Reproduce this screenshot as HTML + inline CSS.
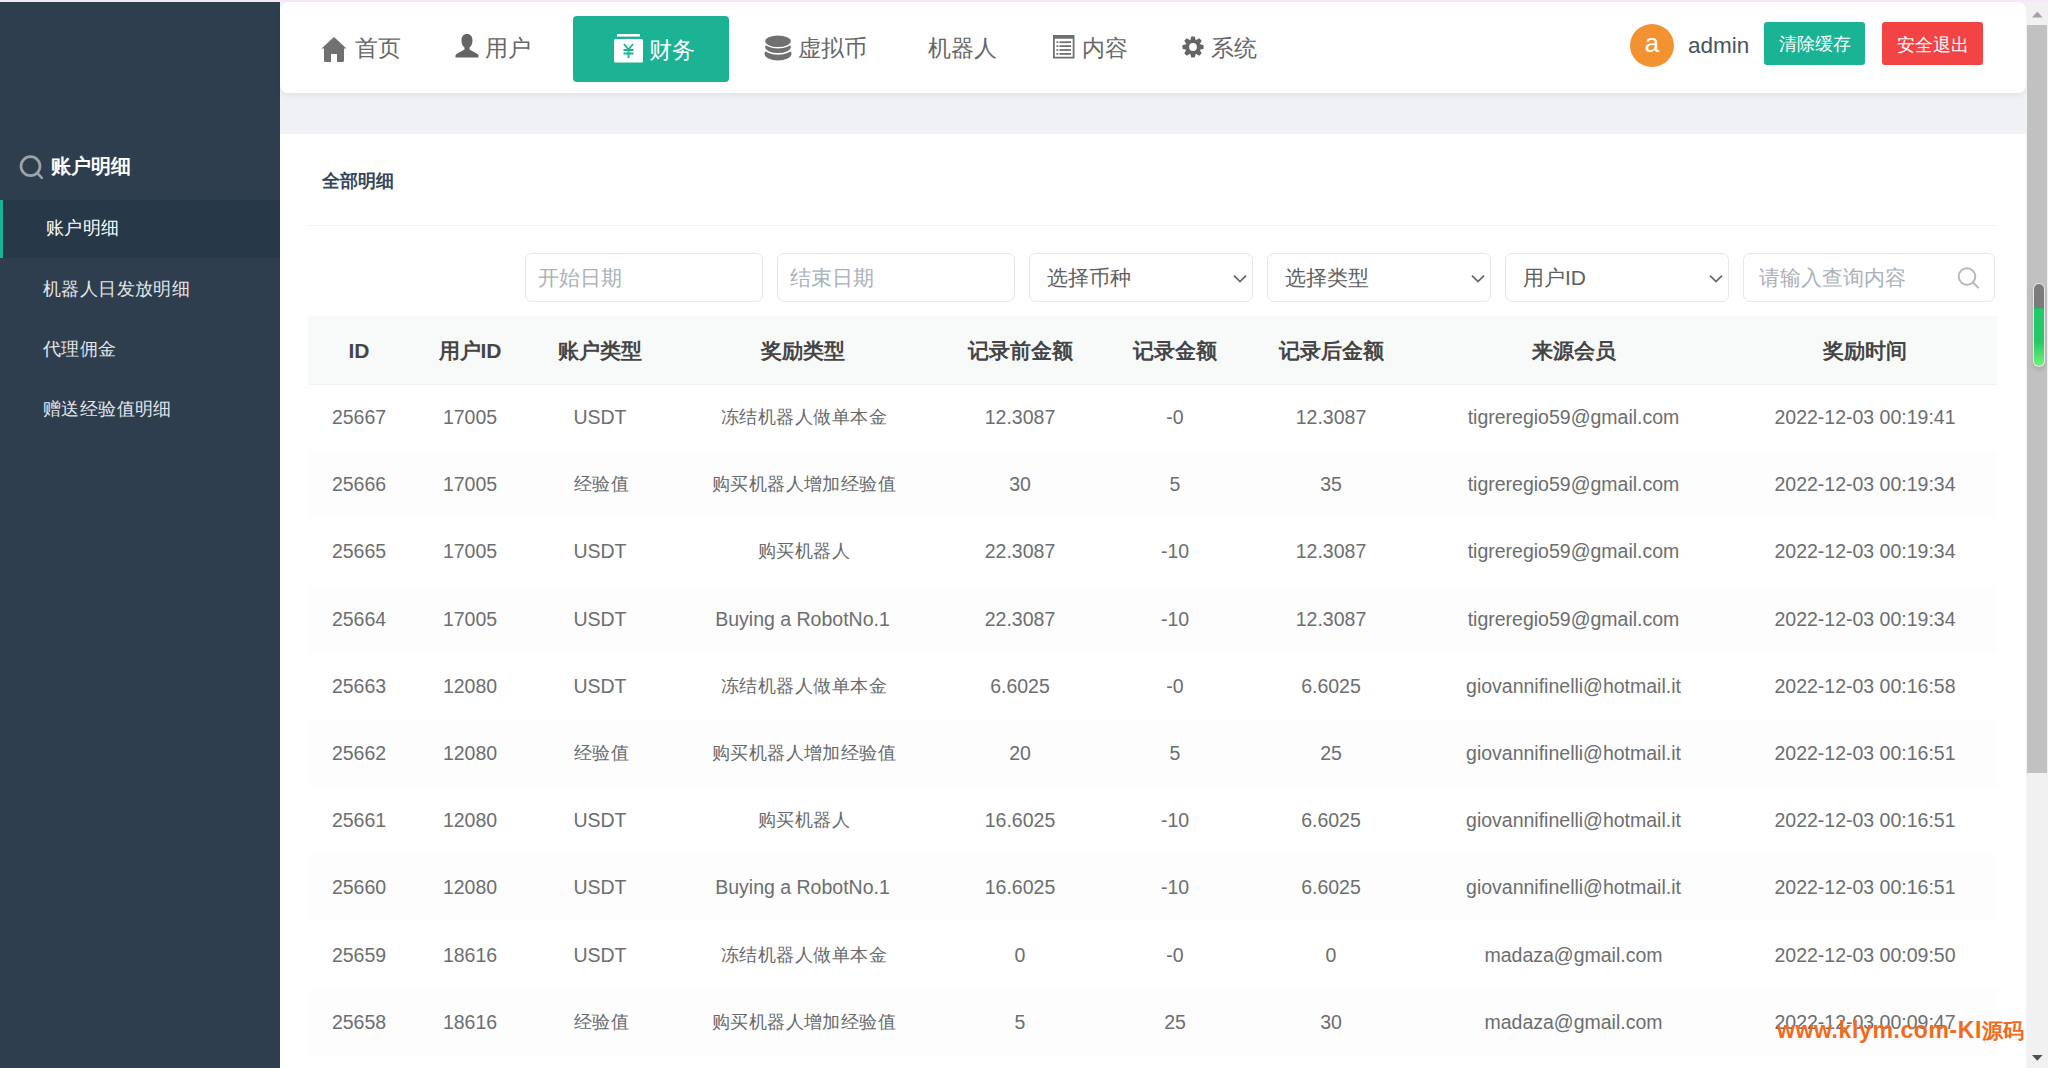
<!DOCTYPE html>
<html><head><meta charset="utf-8">
<style>
*{margin:0;padding:0;box-sizing:border-box}
html,body{width:2048px;height:1068px;overflow:hidden;background:#fff;font-family:"Liberation Sans",sans-serif}
.abs{position:absolute;white-space:nowrap}
#topline{position:absolute;left:0;top:0;width:2048px;height:3px;background:#f7e5f8}
#side{position:absolute;left:0;top:2px;width:280px;height:1066px;background:#2f3e4e}
#main{position:absolute;left:280px;top:2px;width:1747px;height:1066px;background:#f0f1f5}
#hdr{position:absolute;left:280px;top:2px;width:1746px;height:91px;background:#fff;border-radius:8px;box-shadow:0 3px 6px rgba(0,0,0,.05)}
#panel{position:absolute;left:280px;top:134px;width:1747px;height:934px;background:#fff}
#scroll{position:absolute;left:2026px;top:2px;width:22px;height:1066px;background:#f1f1f1}
#thumb{position:absolute;left:2027px;top:25px;width:20px;height:748px;background:#c1c1c1}
.nav{position:absolute;font-size:23px;color:#676767;line-height:26px;white-space:nowrap}
.ico{position:absolute}
.sb{position:absolute;left:0;width:280px;height:60px;color:#e3e6ea;font-size:18px;letter-spacing:0.4px;line-height:60px;white-space:nowrap}
.inp{position:absolute;top:253px;height:49px;border:1px solid #e5e6e7;border-radius:7px;background:#fff;font-size:21px;line-height:47px;padding-left:12px;white-space:nowrap}
.ph{color:#aab1b9}
.sel{color:#5f5f5f;padding-left:17px}
.chev{position:absolute;right:5px;top:20px}
.thead{position:absolute;left:308px;width:1689px;height:69px;background:#f8f9f9;border-bottom:1px solid #f1f1f1}
.tr{position:absolute;left:308px;width:1689px;height:67px}
.even{background:#fdfdfd}
.th,.td{position:absolute;width:300px;text-align:center;white-space:nowrap}
.th{top:0;line-height:70px;font-size:21px;font-weight:bold;color:#454545}
.td{top:0;line-height:67px;font-size:19.5px;color:#6c6e70}
.cj{font-size:18px;letter-spacing:0.45px;padding-left:3px;font-weight:500;color:#676a6c}
</style></head><body>
<div id="topline"></div>
<div id="side"></div>
<div id="main"></div>
<div id="panel"></div>
<div id="hdr"></div>
<div id="scroll"></div>
<div id="thumb"></div>

<!-- sidebar -->
<svg class="ico" style="left:19px;top:154px" width="26" height="26" viewBox="0 0 26 26"><circle cx="11.5" cy="12.2" r="9.5" fill="none" stroke="#9ea3a9" stroke-width="2.7"/><line x1="18.6" y1="19.4" x2="22.8" y2="23.8" stroke="#9ea3a9" stroke-width="2.6" stroke-linecap="round"/></svg>
<div class="abs" style="left:51px;top:154px;font-size:20px;line-height:24px;font-weight:bold;color:#fff">账户明细</div>
<div class="sb" style="top:200px;height:58px;line-height:56px;background:#273848;border-left:3px solid #1ab394;padding-left:43px;color:#fff">账户明细</div>
<div class="sb" style="top:259px;padding-left:43px">机器人日发放明细</div>
<div class="sb" style="top:319px;padding-left:43px">代理佣金</div>
<div class="sb" style="top:379px;padding-left:43px">赠送经验值明细</div>

<!-- header nav -->
<svg class="ico" style="left:321px;top:37px" width="26" height="25" viewBox="0 0 26 25"><path d="M13 0 L0.5 11.5 L3 11.5 L3 23.5 Q3 25 4.5 25 L10 25 L10 17 L16 17 L16 25 L21.5 25 Q23 25 23 23.5 L23 11.5 L25.5 11.5 Z" fill="#707070"/></svg>
<div class="nav" style="left:355px;top:35px">首页</div>
<svg class="ico" style="left:455px;top:34px" width="24" height="24" viewBox="0 0 24 24"><path d="M12 0 C8.5 0 6.5 2.5 6.5 6.5 C6.5 10 8 12.5 9.5 13.5 L9.5 15.5 L1.5 20 Q0 21 0.5 22.5 L0.5 23.5 L23.5 23.5 L23.5 22.5 Q24 21 22.5 20 L14.5 15.5 L14.5 13.5 C16 12.5 17.5 10 17.5 6.5 C17.5 2.5 15.5 0 12 0 Z" fill="#656565"/></svg>
<div class="nav" style="left:485px;top:35px">用户</div>

<div class="abs" style="left:573px;top:16px;width:156px;height:66px;background:#1bb394;border-radius:4px"></div>
<svg class="ico" style="left:614px;top:34px" width="29" height="29" viewBox="0 0 29 29"><rect x="3" y="0" width="23" height="2.6" fill="#fff"/><rect x="0" y="5" width="29" height="23.5" rx="1.5" fill="#fff"/><path d="M10 10 L14.5 15.5 L19 10 M9.5 16 L19.5 16 M9.5 19.5 L19.5 19.5 M14.5 15.5 L14.5 24" stroke="#1bb394" stroke-width="1.8" fill="none"/></svg>
<div class="nav" style="left:649px;top:37px;color:#fff">财务</div>

<svg class="ico" style="left:764px;top:34px" width="28" height="27" viewBox="0 0 28 27"><ellipse cx="14" cy="19.8" rx="13.5" ry="6.6" fill="#707070"/><ellipse cx="14" cy="13.3" rx="13.6" ry="6.6" fill="#707070" stroke="#fff" stroke-width="1.6"/><ellipse cx="14" cy="7.2" rx="13.6" ry="6.6" fill="#707070" stroke="#fff" stroke-width="1.6"/><rect x="0" y="0" width="28" height="1" fill="#fff"/></svg>
<div class="nav" style="left:798px;top:35px">虚拟币</div>
<div class="nav" style="left:928px;top:35px">机器人</div>
<svg class="ico" style="left:1053px;top:35px" width="22" height="24" viewBox="0 0 22 24"><path d="M0 0 H21.5 V23.5 H0 Z M1.8 3.8 V21.7 H19.7 V3.8 Z" fill="#707070" fill-rule="evenodd"/><rect x="3.5" y="6.3" width="1.8" height="1.8" fill="#707070"/><rect x="6.5" y="6.3" width="11.5" height="1.8" fill="#707070"/><rect x="3.5" y="10.2" width="1.8" height="1.8" fill="#707070"/><rect x="6.5" y="10.2" width="11.5" height="1.8" fill="#707070"/><rect x="3.5" y="14.1" width="1.8" height="1.8" fill="#707070"/><rect x="6.5" y="14.1" width="11.5" height="1.8" fill="#707070"/><rect x="3.5" y="18" width="1.8" height="1.8" fill="#707070"/><rect x="6.5" y="18" width="11.5" height="1.8" fill="#707070"/></svg>
<div class="nav" style="left:1082px;top:35px">内容</div>
<svg class="ico" style="left:1181.5px;top:35.5px" width="22" height="22" viewBox="0 0 22 22"><path d="M8.10 4.70 L9.30 0.40 L12.70 0.40 L13.90 4.70 Z M13.40 4.49 L17.29 2.30 L19.70 4.71 L17.51 8.60 Z M17.30 8.10 L21.60 9.30 L21.60 12.70 L17.30 13.90 Z M17.51 13.40 L19.70 17.29 L17.29 19.70 L13.40 17.51 Z M13.90 17.30 L12.70 21.60 L9.30 21.60 L8.10 17.30 Z M8.60 17.51 L4.71 19.70 L2.30 17.29 L4.49 13.40 Z M4.70 13.90 L0.40 12.70 L0.40 9.30 L4.70 8.10 Z M4.49 8.60 L2.30 4.71 L4.71 2.30 L8.60 4.49 Z" fill="#656565"/><circle cx="11" cy="11" r="7.3" fill="#656565"/><circle cx="11" cy="11" r="3.9" fill="#fff"/></svg>
<div class="nav" style="left:1211px;top:35px">系统</div>

<div class="abs" style="left:1630px;top:24px;width:44px;height:43px;border-radius:50%;background:#f39230;color:#fff;font-size:26px;line-height:38px;text-align:center">a</div>
<div class="abs" style="left:1688px;top:33px;font-size:22.5px;line-height:26px;color:#445366">admin</div>
<div class="abs" style="left:1764px;top:22px;width:101px;height:43px;background:#1ab394;border-radius:3px;color:#fff;font-size:18px;line-height:45px;text-align:center">清除缓存</div>
<div class="abs" style="left:1882px;top:22px;width:101px;height:43px;background:#f24444;border-radius:3px;color:#fff;font-size:18px;line-height:46px;text-align:center">安全退出</div>

<!-- panel content -->
<div class="abs" style="left:322px;top:168px;font-size:18px;line-height:26px;font-weight:bold;color:#34465a">全部明细</div>
<div class="abs" style="left:308px;top:225px;width:1689px;height:1px;background:#f1f1f1"></div>

<div class="inp ph" style="left:525px;width:238px">开始日期</div>
<div class="inp ph" style="left:777px;width:238px">结束日期</div>
<div class="inp sel" style="left:1029px;width:224px">选择币种<svg class="chev" width="14" height="10" viewBox="0 0 14 10"><path d="M1 1.6 L7 7.6 L13 1.6" stroke="#6a6a6a" stroke-width="1.8" fill="none"/></svg></div>
<div class="inp sel" style="left:1267px;width:224px">选择类型<svg class="chev" width="14" height="10" viewBox="0 0 14 10"><path d="M1 1.6 L7 7.6 L13 1.6" stroke="#6a6a6a" stroke-width="1.8" fill="none"/></svg></div>
<div class="inp sel" style="left:1505px;width:224px">用户ID<svg class="chev" width="14" height="10" viewBox="0 0 14 10"><path d="M1 1.6 L7 7.6 L13 1.6" stroke="#6a6a6a" stroke-width="1.8" fill="none"/></svg></div>
<div class="inp ph" style="left:1743px;width:252px;padding-left:15px">请输入查询内容<svg class="ico" style="left:213px;top:13px" width="24" height="22" viewBox="0 0 24 22"><circle cx="10" cy="9.5" r="8.3" fill="none" stroke="#b8b8b8" stroke-width="2"/><line x1="16" y1="15.5" x2="21" y2="20.5" stroke="#b8b8b8" stroke-width="2" stroke-linecap="round"/></svg></div>

<div class="thead" style="top:316px"><span class="th" style="left:-99px">ID</span><span class="th" style="left:12px">用户ID</span><span class="th" style="left:142px">账户类型</span><span class="th" style="left:344.5px">奖励类型</span><span class="th" style="left:562px">记录前金额</span><span class="th" style="left:717px">记录金额</span><span class="th" style="left:873px">记录后金额</span><span class="th" style="left:1115.5px">来源会员</span><span class="th" style="left:1407px">奖励时间</span></div>
<div class="tr odd" style="top:384.0px"><span class="td" style="left:-99px">25667</span><span class="td" style="left:12px">17005</span><span class="td" style="left:142px">USDT</span><span class="td cj" style="left:344.5px">冻结机器人做单本金</span><span class="td" style="left:562px">12.3087</span><span class="td" style="left:717px">-0</span><span class="td" style="left:873px">12.3087</span><span class="td" style="left:1115.5px">tigreregio59@gmail.com</span><span class="td" style="left:1407px">2022-12-03 00:19:41</span></div>
<div class="tr even" style="top:451.2px"><span class="td" style="left:-99px">25666</span><span class="td" style="left:12px">17005</span><span class="td cj" style="left:142px">经验值</span><span class="td cj" style="left:344.5px">购买机器人增加经验值</span><span class="td" style="left:562px">30</span><span class="td" style="left:717px">5</span><span class="td" style="left:873px">35</span><span class="td" style="left:1115.5px">tigreregio59@gmail.com</span><span class="td" style="left:1407px">2022-12-03 00:19:34</span></div>
<div class="tr odd" style="top:518.4px"><span class="td" style="left:-99px">25665</span><span class="td" style="left:12px">17005</span><span class="td" style="left:142px">USDT</span><span class="td cj" style="left:344.5px">购买机器人</span><span class="td" style="left:562px">22.3087</span><span class="td" style="left:717px">-10</span><span class="td" style="left:873px">12.3087</span><span class="td" style="left:1115.5px">tigreregio59@gmail.com</span><span class="td" style="left:1407px">2022-12-03 00:19:34</span></div>
<div class="tr even" style="top:585.6px"><span class="td" style="left:-99px">25664</span><span class="td" style="left:12px">17005</span><span class="td" style="left:142px">USDT</span><span class="td" style="left:344.5px">Buying a RobotNo.1</span><span class="td" style="left:562px">22.3087</span><span class="td" style="left:717px">-10</span><span class="td" style="left:873px">12.3087</span><span class="td" style="left:1115.5px">tigreregio59@gmail.com</span><span class="td" style="left:1407px">2022-12-03 00:19:34</span></div>
<div class="tr odd" style="top:652.8px"><span class="td" style="left:-99px">25663</span><span class="td" style="left:12px">12080</span><span class="td" style="left:142px">USDT</span><span class="td cj" style="left:344.5px">冻结机器人做单本金</span><span class="td" style="left:562px">6.6025</span><span class="td" style="left:717px">-0</span><span class="td" style="left:873px">6.6025</span><span class="td" style="left:1115.5px">giovannifinelli@hotmail.it</span><span class="td" style="left:1407px">2022-12-03 00:16:58</span></div>
<div class="tr even" style="top:720.0px"><span class="td" style="left:-99px">25662</span><span class="td" style="left:12px">12080</span><span class="td cj" style="left:142px">经验值</span><span class="td cj" style="left:344.5px">购买机器人增加经验值</span><span class="td" style="left:562px">20</span><span class="td" style="left:717px">5</span><span class="td" style="left:873px">25</span><span class="td" style="left:1115.5px">giovannifinelli@hotmail.it</span><span class="td" style="left:1407px">2022-12-03 00:16:51</span></div>
<div class="tr odd" style="top:787.2px"><span class="td" style="left:-99px">25661</span><span class="td" style="left:12px">12080</span><span class="td" style="left:142px">USDT</span><span class="td cj" style="left:344.5px">购买机器人</span><span class="td" style="left:562px">16.6025</span><span class="td" style="left:717px">-10</span><span class="td" style="left:873px">6.6025</span><span class="td" style="left:1115.5px">giovannifinelli@hotmail.it</span><span class="td" style="left:1407px">2022-12-03 00:16:51</span></div>
<div class="tr even" style="top:854.4px"><span class="td" style="left:-99px">25660</span><span class="td" style="left:12px">12080</span><span class="td" style="left:142px">USDT</span><span class="td" style="left:344.5px">Buying a RobotNo.1</span><span class="td" style="left:562px">16.6025</span><span class="td" style="left:717px">-10</span><span class="td" style="left:873px">6.6025</span><span class="td" style="left:1115.5px">giovannifinelli@hotmail.it</span><span class="td" style="left:1407px">2022-12-03 00:16:51</span></div>
<div class="tr odd" style="top:921.6px"><span class="td" style="left:-99px">25659</span><span class="td" style="left:12px">18616</span><span class="td" style="left:142px">USDT</span><span class="td cj" style="left:344.5px">冻结机器人做单本金</span><span class="td" style="left:562px">0</span><span class="td" style="left:717px">-0</span><span class="td" style="left:873px">0</span><span class="td" style="left:1115.5px">madaza@gmail.com</span><span class="td" style="left:1407px">2022-12-03 00:09:50</span></div>
<div class="tr even" style="top:988.8px"><span class="td" style="left:-99px">25658</span><span class="td" style="left:12px">18616</span><span class="td cj" style="left:142px">经验值</span><span class="td cj" style="left:344.5px">购买机器人增加经验值</span><span class="td" style="left:562px">5</span><span class="td" style="left:717px">25</span><span class="td" style="left:873px">30</span><span class="td" style="left:1115.5px">madaza@gmail.com</span><span class="td" style="left:1407px">2022-12-03 00:09:47</span></div>

<!-- scrollbar arrows -->
<svg class="ico" style="left:2031px;top:10.5px" width="13" height="8" viewBox="0 0 13 8"><path d="M6.3 0.6 L11.6 6.4 L1 6.4 Z" fill="#a3a3a3"/></svg>
<svg class="ico" style="left:2031px;top:1054px" width="13" height="8" viewBox="0 0 13 8"><path d="M1 1 L11.6 1 L6.3 6.8 Z" fill="#505050"/></svg>
<!-- green widget -->
<div class="abs" style="left:2033px;top:283px;width:12px;height:84px;border-radius:6px;background:#e8e8e8;box-shadow:0 3px 4px rgba(0,0,0,.12)"></div>
<div class="abs" style="left:2034px;top:284px;width:10px;height:82px;border-radius:5px;background:linear-gradient(#7b7b7b 0,#7b7b7b 29%,#1db85a 29%,#22c86a 31%,#27c766 70%,#6ff27a 100%)"></div>

<!-- watermark -->
<div class="abs" id="wm" style="left:1777px;top:1016px;font-size:23px;line-height:28px;font-weight:bold;color:#f26b1d"><span id="wm1" style="letter-spacing:0.6px">www.klym.com-KI</span><span id="wm2" style="font-size:21px">源码</span></div>
</body></html>
